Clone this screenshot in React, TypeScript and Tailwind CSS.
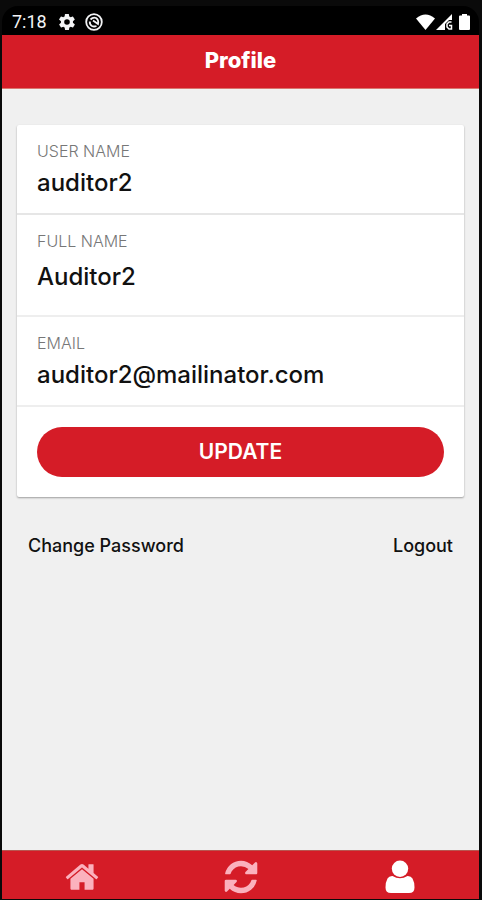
import { useState } from "react";

function StatusBar() {
  return (
    <div className="h-[29px] mt-[6px] shrink-0 bg-black rounded-t-2xl pl-[10px] pr-[9px] pt-0.5 flex items-center justify-between text-gray-100">
      <div className="flex items-center">
        <span className="font-[Roboto,sans-serif] text-[18px] leading-5 w-[47px]">7:18</span>
        <svg viewBox="2 2 20 20" className="w-4 h-4 mr-[10px]" fill="currentColor">
          <path
            fillRule="evenodd"
            d="M19.4 13a7.5 7.5 0 0 0 0-2l2.1-1.7a.5.5 0 0 0 .1-.6l-2-3.4a.5.5 0 0 0-.6-.2l-2.5 1a7.3 7.3 0 0 0-1.7-1l-.4-2.7a.5.5 0 0 0-.5-.4h-4a.5.5 0 0 0-.5.4l-.4 2.7a7.7 7.7 0 0 0-1.7 1l-2.5-1a.5.5 0 0 0-.6.2l-2 3.4a.5.5 0 0 0 .1.6L4.5 11a7.9 7.9 0 0 0 0 2l-2.1 1.7a.5.5 0 0 0-.1.6l2 3.4c.1.2.4.3.6.2l2.5-1a7.3 7.3 0 0 0 1.7 1l.4 2.7c0 .2.2.4.5.4h4c.3 0 .5-.2.5-.4l.4-2.7a7.7 7.7 0 0 0 1.7-1l2.5 1c.2.1.5 0 .6-.2l2-3.4a.5.5 0 0 0-.1-.6zM12 15.5a3.5 3.5 0 1 1 0-7 3.5 3.5 0 0 1 0 7z"
          />
        </svg>
        <svg viewBox="0 0 18 18" className="w-[18px] h-[18px]" fill="none" stroke="currentColor">
          <circle cx="9" cy="9" r="7.8" strokeWidth="1.8" />
          <path d="M5.500 6.500Q8 4 11 5Q14 7 13 11L8 7.500" strokeWidth="1.8" />
          <path d="M4.800 8.500Q4.500 11.500 7 13Q9 14 11.500 13" strokeWidth="1.8" />
        </svg>
      </div>
      <div className="flex items-center text-white">
        <svg viewBox="0 0 19 16" className="w-[19px] h-4 mr-px" fill="currentColor">
          <path d="M0 4.5Q9.500-3.500 19 4.500L9.500 16z" />
        </svg>
        <svg viewBox="0 0 17 16" className="w-[17px] h-4 mr-1.5" fill="currentColor">
          <path d="M0 16L16 0V6H13L9 10V16z" />
          <path d="M15.500 8H13L11 10V13L13 15H15.500V11.500H13" fill="none" stroke="currentColor" strokeWidth="1.500" />
        </svg>
        <svg viewBox="0 0 11 16" className="w-[11px] h-4" fill="currentColor">
          <path d="M3 0h5v1.500h2q1 0 1 1v12.500q0 1-1 1H1q-1 0-1-1V2.500q0-1 1-1h2z" />
        </svg>
      </div>
    </div>
  );
}

function Header() {
  return (
    <header className="h-[54px] shrink-0 bg-[#d51c27] border-b border-[#d9766f] flex items-center justify-center pb-1">
      <h1 className="text-white text-[22px] leading-6 font-extrabold">Profile</h1>
    </header>
  );
}

const inputClass = "block w-full bg-transparent text-[24px] leading-7 font-medium text-[#111111] outline-none";
const labelClass = "block text-[16px] leading-5 font-light text-[#777777]";

function HomeIcon() {
  return (
    <svg viewBox="0 0 1792 1792" className="w-[36px] h-[36px]" fill="currentColor">
      <path d="M1472 992v480q0 26-19 45t-45 19h-384v-384h-256v384h-384q-26 0-45-19t-19-45v-480q0-1 .5-3t.5-3l575-474 575 474q1 2 1 6zm223-69l-62 74q-8 9-21 11h-3q-13 0-21-7l-692-577-692 577q-12 8-24 7-13-2-21-11l-62-74q-8-10-7-23.500t11-21.500l719-599q32-26 76-26t76 26l244 204v-195q0-14 9-23t23-9h192q14 0 23 9t9 23v408l219 182q10 8 11 21.500t-7 23.500z" />
    </svg>
  );
}

function SyncIcon() {
  return (
    <svg viewBox="0 0 1792 1792" className="w-[38px] h-[38px]" fill="currentColor">
      <path d="M1639 1056q0 5-1 7-64 268-268 434.500t-478 166.500q-146 0-282.500-55t-243.500-157l-129 129q-19 19-45 19t-45-19-19-45v-448q0-26 19-45t45-19h448q26 0 45 19t19 45-19 45l-137 137q71 66 161 102t187 36q134 0 250-65t186-179q11-17 53-117 8-23 30-23h192q13 0 22.500 9.500t9.500 22.500zm25-800v448q0 26-19 45t-45 19h-448q-26 0-45-19t-19-45 19-45l138-138q-148-137-349-137-134 0-250 65t-186 179q-11 17-53 117-8 23-30 23h-199q-13 0-22.500-9.500t-9.500-22.500v-7q65-268 270-434.500t480-166.500q146 0 284 55.500t245 156.500l130-129q19-19 45-19t45 19 19 45z" />
    </svg>
  );
}

function UserIcon() {
  return (
    <svg viewBox="0 0 30 34" className="w-[30px] h-[34px]" fill="currentColor">
      <circle cx="15" cy="8.800" r="8.200" />
      <path d="M7.500 16Q15 20.500 22.500 16Q26 15.800 27.500 18.500Q29.500 22 29.500 27.500Q29.500 33 24 33H6Q.5 33 .5 27.500Q.5 22 2.500 18.500Q4 15.800 7.500 16z" />
    </svg>
  );
}

function BottomNav() {
  return (
    <nav className="h-[49px] shrink-0 bg-[#d51c27] border-t border-[#b85650] grid grid-cols-3">
      <a href="#home" aria-label="Home" className="flex items-center justify-center pt-1 text-[#fbb1bd]">
        <HomeIcon />
      </a>
      <a href="#sync" aria-label="Sync" className="flex items-center justify-center pt-1 text-[#fbb1bd]">
        <SyncIcon />
      </a>
      <a href="#profile" aria-label="Profile" aria-current="page" className="flex items-center justify-center pt-1 text-white">
        <UserIcon />
      </a>
    </nav>
  );
}

export default function App() {
  const [fullName, setFullName] = useState("Auditor2");
  const [email, setEmail] = useState("auditor2@mailinator.com");

  return (
    <div className="min-h-screen bg-[#0a0a0a] pl-[2px] pr-[3px] pb-px flex flex-col font-[Inter,sans-serif]">
      <StatusBar />
      <Header />

      <main className="flex-1 bg-[#f0f0f0] px-[15px] pt-9">
        <form
          onSubmit={(e) => e.preventDefault()}
          className="bg-white rounded-xs shadow-[0_1px_2px_rgba(0,0,0,0.35)]"
        >
          <div className="px-5 pt-4 pb-4 border-b-2 border-[#e6e6e6]">
            <label htmlFor="username" className={labelClass}>USER NAME</label>
            <input id="username" readOnly value="auditor2" className={`${inputClass} mt-2`} />
          </div>
          <div className="px-5 pt-4 pb-6 border-b-2 border-[#eeeeee]">
            <label htmlFor="fullname" className={labelClass}>FULL NAME</label>
            <input
              id="fullname"
              value={fullName}
              onChange={(e) => setFullName(e.target.value)}
              className={`${inputClass} mt-3`}
            />
          </div>
          <div className="px-5 pt-4 pb-4 border-b-2 border-[#eeeeee]">
            <label htmlFor="email" className={labelClass}>EMAIL</label>
            <input
              id="email"
              type="email"
              value={email}
              onChange={(e) => setEmail(e.target.value)}
              className={`${inputClass} mt-2`}
            />
          </div>
          <div className="px-5 py-5">
            <button type="submit" className="block w-full h-[50px] rounded-full bg-[#d51c27] text-white text-[21px] leading-6 font-semibold">
              UPDATE
            </button>
          </div>
        </form>

        {/* Account links */}
        <div className="flex justify-between px-[11px] pt-[37px] text-[18px] leading-6 font-medium text-[#111111]">
          <a href="#change-password">Change Password</a>
          <a href="#logout">Logout</a>
        </div>
      </main>

      <BottomNav />
    </div>
  );
}
